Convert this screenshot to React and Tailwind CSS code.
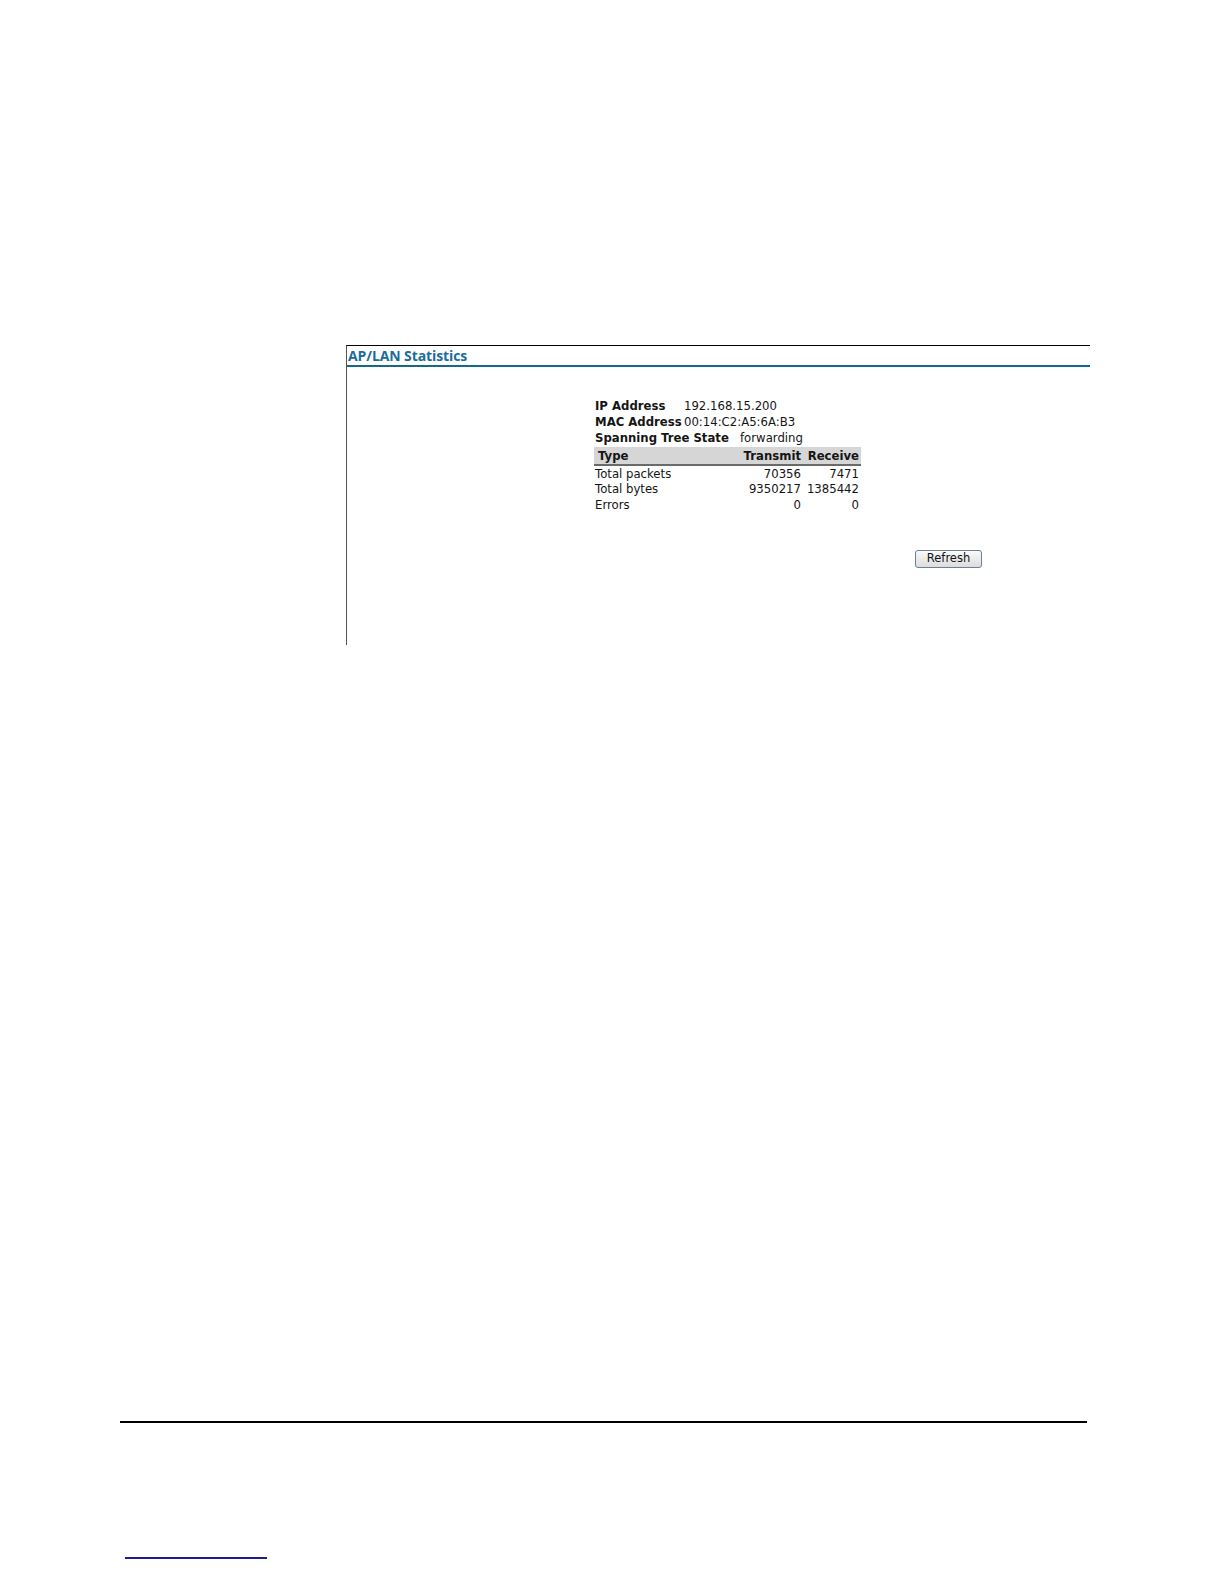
export default function App() {
  const font = { fontFamily: '"DejaVu Sans", Verdana, sans-serif' };
  return (
    <div className="w-[1224px] h-[1584px] bg-white flex flex-col" style={font}>
      <div className="h-[345px]" />
      <div className="ml-[346px] w-[744px] h-[300px] border-t border-t-black border-l border-l-[#555] flex flex-col">
        <div className="h-[21px] border-b-2 border-[#16668f] pl-[1px] flex items-center">
          <span className="text-[14px] font-bold text-[#1a6c9c] leading-none tracking-[-0.1px]" style={{ fontFamily: '"Open Sans", sans-serif' }}>
            AP/LAN Statistics
          </span>
        </div>
        <div className="pl-[248px] pt-[31px] text-[11.7px] text-[#151515] leading-[16px]">
          <div className="flex">
            <span className="w-[89px] font-bold">IP Address</span>
            <span>192.168.15.200</span>
          </div>
          <div className="flex">
            <span className="w-[89px] font-bold whitespace-nowrap">MAC Address</span>
            <span>00:14:C2:A5:6A:B3</span>
          </div>
          <div className="flex">
            <span className="w-[145px] font-bold whitespace-nowrap">Spanning Tree State</span>
            <span>forwarding</span>
          </div>
          <div className="w-[267px] -ml-[1px] mt-[1px]">
            <div className="flex bg-[#d6d6d6] border-b-2 border-[#6a6a6a] h-[19px] items-center font-bold">
              <span className="flex-1 pl-[4px]">Type</span>
              <span className="w-[100px] text-right">Transmit</span>
              <span className="w-[60px] text-right pr-[2px]">Receive</span>
            </div>
            {[
              ["Total packets", "70356", "7471"],
              ["Total bytes", "9350217", "1385442"],
              ["Errors", "0", "0"],
            ].map((r) => (
              <div key={r[0]} className="flex h-[15.5px] items-center">
                <span className="flex-1 pl-[1px]">{r[0]}</span>
                <span className="w-[100px] text-right">{r[1]}</span>
                <span className="w-[60px] text-right pr-[2px]">{r[2]}</span>
              </div>
            ))}
          </div>
          <div className="pl-[320px] mt-[37px]">
            <button className="w-[67px] h-[18px] rounded-[3px] border border-[#6f7f93] bg-gradient-to-b from-[#fafafa] to-[#dcdcdc] text-[11.5px] leading-none text-[#111]">
              Refresh
            </button>
          </div>
        </div>
      </div>
      <div className="h-[776px]" />
      <div className="ml-[120px] w-[967px] h-[2px] bg-black" />
      <div className="h-[134px]" />
      <div className="ml-[125px] w-[142px] h-[2px] bg-[#1c1c8a]" />
    </div>
  );
}
